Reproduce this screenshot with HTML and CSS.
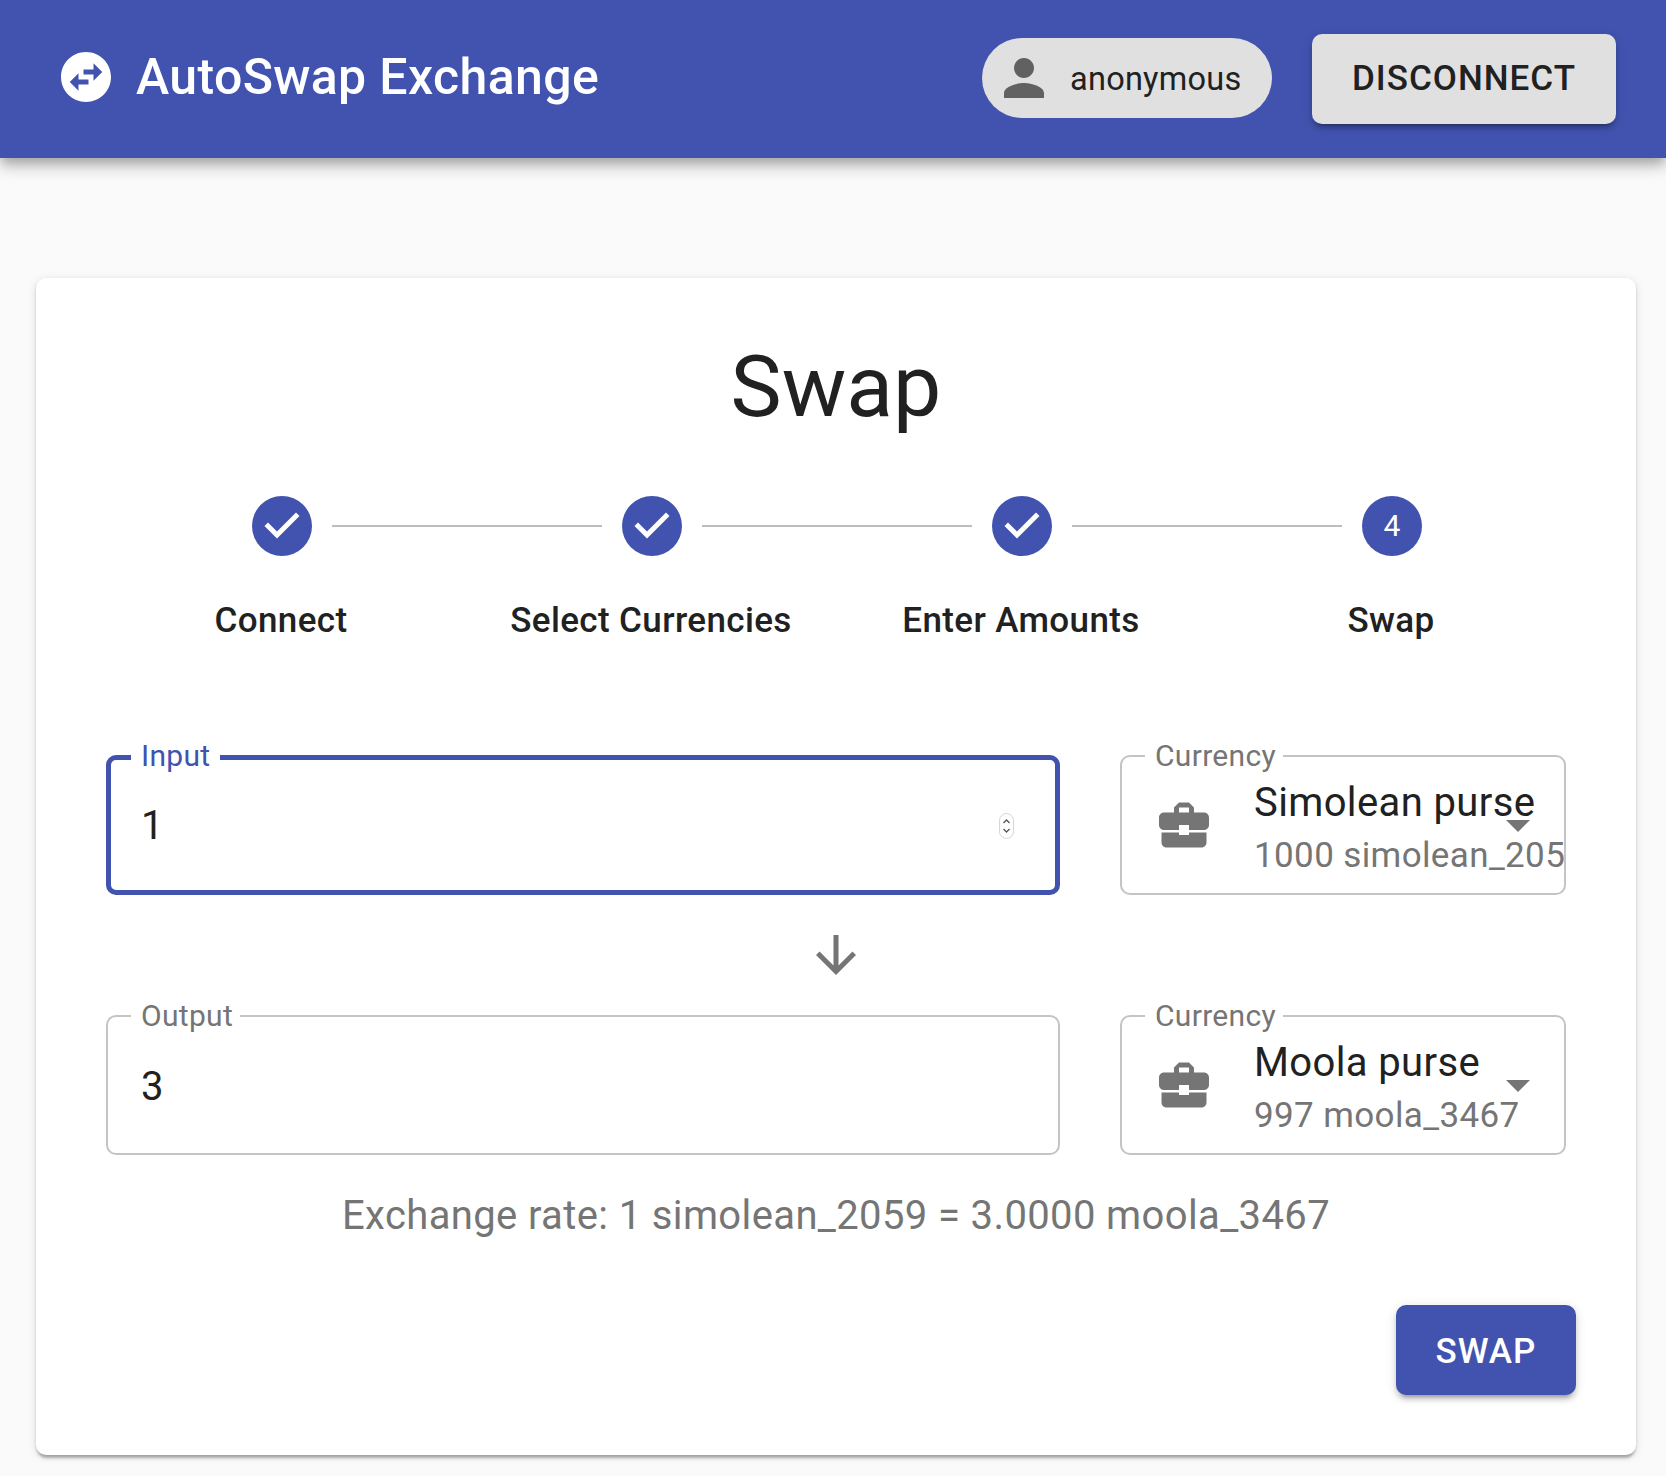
FILE: index.html
```html
<!DOCTYPE html>
<html lang="en">
<head>
<meta charset="utf-8">
<title>AutoSwap Exchange</title>
<link rel="stylesheet" href="styles.css">
</head>
<body>
<header class="appbar">
  <svg class="logo" viewBox="0 0 24 24"><path d="M22 12c0-5.52-4.48-10-10-10S2 6.48 2 12s4.48 10 10 10 10-4.48 10-10zm-7-5.5l3.5 3.5-3.5 3.5V11h-4V9h4V6.5zm-6 11L5.5 14 9 10.5V13h4v2H9v2.5z"/></svg>
  <div class="brand">AutoSwap Exchange</div>
  <div class="chip">
    <svg class="chip-icon" viewBox="0 0 24 24"><path d="M12 12c2.21 0 4-1.79 4-4s-1.79-4-4-4-4 1.79-4 4 1.79 4 4 4zm0 2c-2.67 0-8 1.34-8 4v2h16v-2c0-2.66-5.33-4-8-4z"/></svg>
    <span>anonymous</span>
  </div>
  <button class="btn btn-default">DISCONNECT</button>
</header>
<main class="page">
  <section class="card">
    <h1 class="title">Swap</h1>
    <ol class="stepper">
      <li class="step">
        <svg class="step-icon" viewBox="0 0 24 24"><path d="M12 0a12 12 0 1 0 0 24 12 12 0 0 0 0-24zm-2 17l-5-5 1.4-1.4 3.6 3.6 7.6-7.6L19 8l-9 9z"/></svg>
        <span class="step-label">Connect</span>
      </li>
      <li class="step">
        <i class="connector"></i>
        <svg class="step-icon" viewBox="0 0 24 24"><path d="M12 0a12 12 0 1 0 0 24 12 12 0 0 0 0-24zm-2 17l-5-5 1.4-1.4 3.6 3.6 7.6-7.6L19 8l-9 9z"/></svg>
        <span class="step-label">Select Currencies</span>
      </li>
      <li class="step">
        <i class="connector"></i>
        <svg class="step-icon" viewBox="0 0 24 24"><path d="M12 0a12 12 0 1 0 0 24 12 12 0 0 0 0-24zm-2 17l-5-5 1.4-1.4 3.6 3.6 7.6-7.6L19 8l-9 9z"/></svg>
        <span class="step-label">Enter Amounts</span>
      </li>
      <li class="step">
        <i class="connector"></i>
        <span class="step-num">4</span>
        <span class="step-label">Swap</span>
      </li>
    </ol>
    <form class="form">
      <div class="row">
        <div class="field field-focus">
          <label class="field-label">Input</label>
          <input class="field-input" type="text" value="1" readonly>
          <svg class="spinner" viewBox="0 0 15 26"><rect x=".5" y=".5" width="14" height="25" rx="7" fill="#fff" stroke="#d5d5d5"/><path d="M4.5 10l3-3 3 3M4.5 16l3 3 3-3" fill="none" stroke="#555" stroke-width="1.3"/></svg>
        </div>
        <div class="field field-select">
          <label class="field-label">Currency</label>
          <svg class="purse" viewBox="0 0 24 24"><path d="M10 16v-1H3.01L3 19c0 1.11.89 2 2 2h14c1.11 0 2-.89 2-2v-4h-7v1h-4zm10-9h-4.01V5l-2-2h-4l-2 2v2H4c-1.1 0-2 .9-2 2v3c0 1.1.9 2 2 2h6v-2h4v2h6c1.1 0 2-.9 2-2V9c0-1.1-.9-2-2-2zm-6 0h-4V5h4v2z"/></svg>
          <div class="purse-text">
            <div class="purse-name">Simolean purse</div>
            <div class="purse-balance">1000 simolean_2059</div>
          </div>
          <i class="caret"></i>
        </div>
      </div>
      <div class="arrow-row">
        <svg class="arrow" viewBox="0 0 24 24"><path d="M20 12l-1.41-1.41L13 16.17V4h-2v12.17l-5.58-5.59L4 12l8 8 8-8z"/></svg>
      </div>
      <div class="row">
        <div class="field">
          <label class="field-label">Output</label>
          <input class="field-input" type="text" value="3" readonly>
        </div>
        <div class="field field-select">
          <label class="field-label">Currency</label>
          <svg class="purse" viewBox="0 0 24 24"><path d="M10 16v-1H3.01L3 19c0 1.11.89 2 2 2h14c1.11 0 2-.89 2-2v-4h-7v1h-4zm10-9h-4.01V5l-2-2h-4l-2 2v2H4c-1.1 0-2 .9-2 2v3c0 1.1.9 2 2 2h6v-2h4v2h6c1.1 0 2-.9 2-2V9c0-1.1-.9-2-2-2zm-6 0h-4V5h4v2z"/></svg>
          <div class="purse-text">
            <div class="purse-name">Moola purse</div>
            <div class="purse-balance">997 moola_3467</div>
          </div>
          <i class="caret"></i>
        </div>
      </div>
      <p class="rate">Exchange rate: 1 simolean_2059 = 3.0000 moola_3467</p>
      <div class="actions">
        <button class="btn btn-primary" type="button">SWAP</button>
      </div>
    </form>
  </section>
</main>
</body>
</html>
```

FILE: styles.css
```css
* { box-sizing: border-box; }
html, body { margin: 0; padding: 0; }
body {
  background: #fafafa;
  color: #212121;
  font-family: Roboto, "Noto Sans", sans-serif;
  letter-spacing: .375px;
  height: 1476px;
  overflow: hidden;
}
.appbar {
  height: 158px;
  background: #4153af;
  display: flex;
  align-items: center;
  padding: 0 50px 4px 56px;
  box-shadow: 0 5px 10px -2px rgba(0,0,0,.2), 0 10px 12px 0 rgba(0,0,0,.14), 0 2px 25px 0 rgba(0,0,0,.12);
  position: relative;
}
.logo { width: 60px; height: 60px; fill: #fff; flex: none; }
.brand {
  margin-left: 20px;
  margin-right: auto;
  font-size: 50px;
  font-weight: 500;
  color: #fff;
  line-height: 1.6;
}
.chip {
  height: 80px;
  width: 290px;
  border-radius: 40px;
  background: #e0e0e0;
  display: flex;
  align-items: center;
  padding-left: 12px;
  font-size: 32.5px;
  letter-spacing: .25px;
  margin-right: 40px;
  margin-top: 2px;
}
.chip span { padding-top: 2px; }
.chip-icon { width: 60px; height: 60px; fill: #616161; margin-right: 16px; flex: none; }
.btn {
  border: 0;
  border-radius: 10px;
  height: 90px;
  font-family: inherit;
  font-size: 35px;
  font-weight: 500;
  letter-spacing: 1px;
  padding: 0;
}
.btn-default {
  width: 304px;
  margin-top: 4px;
  padding-bottom: 2px;
  background: #e0e0e0;
  color: #212121;
  box-shadow: 0 7px 3px -5px rgba(0,0,0,.2), 0 5px 5px 0 rgba(0,0,0,.14), 0 2px 12px 0 rgba(0,0,0,.12);
}
.btn-primary {
  width: 180px;
  padding-top: 2px;
  background: #4153af;
  color: #fff;
  box-shadow: 0 7px 3px -5px rgba(0,0,0,.2), 0 5px 5px 0 rgba(0,0,0,.14), 0 2px 12px 0 rgba(0,0,0,.12);
}
.page { padding: 120px 30px 0 36px; }
.card {
  height: 1177px;
  background: #fff;
  border-radius: 10px;
  box-shadow: 0 5px 3px -2px rgba(0,0,0,.2), 0 2px 3px 0 rgba(0,0,0,.14), 0 2px 8px 0 rgba(0,0,0,.12);
  padding-top: 59px;
}
.title {
  margin: 0;
  font-size: 86px;
  font-weight: 400;
  letter-spacing: 0;
  line-height: 100px;
  text-align: center;
}
.stepper {
  list-style: none;
  margin: 59px 0 0;
  padding: 0 61px;
  display: grid;
  grid-template-columns: repeat(4, 370px);
}
.step {
  position: relative;
  display: flex;
  flex-direction: column;
  align-items: center;
}
.connector {
  position: absolute;
  top: 29px;
  left: -135px;
  width: 270px;
  height: 2px;
  background: #bdbdbd;
}
.step-icon { width: 60px; height: 60px; fill: #4153af; display: block; }
.step-num {
  width: 60px;
  height: 60px;
  padding-bottom: 1px;
  border-radius: 50%;
  background: #4153af;
  color: #fff;
  font-size: 30px;
  display: flex;
  align-items: center;
  justify-content: center;
}
.step-label {
  margin-top: 40px;
  padding-right: 2px;
  font-size: 35px;
  font-weight: 500;
  line-height: 50px;
}
.form { padding: 0 70px; margin-top: 109px; }
.row {
  display: grid;
  grid-template-columns: 954px 446px;
  column-gap: 60px;
  height: 140px;
}
.field {
  position: relative;
  border: 2.5px solid #c4c4c4;
  border-radius: 10px;
  display: flex;
  align-items: center;
}
.field-focus { border: 5px solid #4153af; }
.field-label {
  position: absolute;
  left: 23px;
  top: -19px;
  padding: 0 7px 0 10px;
  background: #fff;
  color: #757575;
  font-size: 30px;
  letter-spacing: .3px;
  line-height: 36px;
}
.field-focus .field-label { left: 20px; top: -22px; padding-right: 10px; color: #4153af; }
.field-input {
  border: 0;
  outline: 0;
  background: none;
  width: 100%;
  padding: 2px 33px 0;
  font-family: inherit;
  font-size: 40px;
  letter-spacing: inherit;
  color: #212121;
}
.field-focus .field-input { padding: 1px 30px 0; }
.spinner { position: absolute; right: 41px; top: 53px; width: 15px; height: 26px; }
.field-select { padding-left: 32px; }
.purse { width: 60px; height: 60px; fill: #757575; flex: none; margin-right: 40px; }
.purse-text { flex: 1; min-width: 0; overflow: hidden; white-space: nowrap; margin-top: 9px; }
.purse-name { font-size: 40px; line-height: 50px; }
.purse-balance { font-size: 35px; line-height: 50px; color: #757575; margin-top: 3px; }
.caret {
  position: absolute;
  right: 34px;
  top: 63px;
  width: 0;
  height: 0;
  border-left: 12px solid transparent;
  border-right: 12px solid transparent;
  border-top: 12px solid #757575;
}
.arrow-row { height: 120px; display: flex; align-items: center; justify-content: center; }
.arrow { width: 60px; height: 60px; fill: #757575; }
.rate {
  margin: 31px 0 0;
  text-align: center;
  font-size: 40px;
  line-height: 60px;
  color: #757575;
}
.actions { display: flex; justify-content: flex-end; margin: 59px -10px 0 0; }
```
